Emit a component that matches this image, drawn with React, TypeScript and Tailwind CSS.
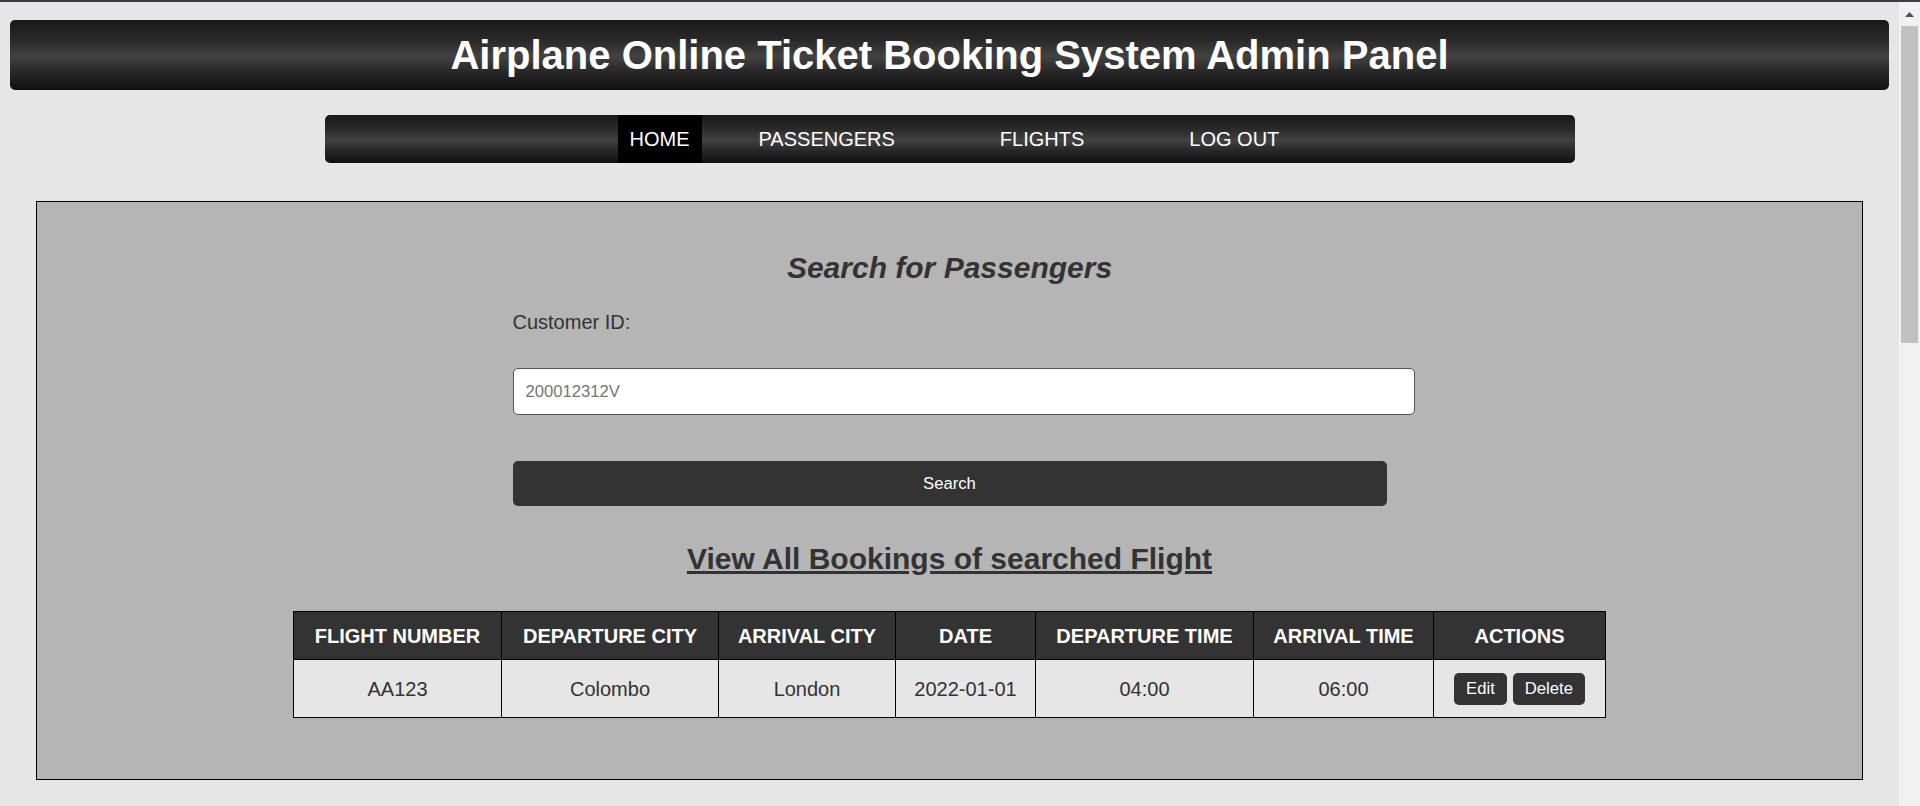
import React from "react";

const grad =
  "bg-[linear-gradient(to_bottom,#191919_0%,#2a2a2a_30%,#424242_52%,#262626_75%,#111111_100%)]";

const cols = [208, 217, 177, 140, 218, 180, 172];
const heads = [
  "FLIGHT NUMBER",
  "DEPARTURE CITY",
  "ARRIVAL CITY",
  "DATE",
  "DEPARTURE TIME",
  "ARRIVAL TIME",
  "ACTIONS",
];
const row = ["AA123", "Colombo", "London", "2022-01-01", "04:00", "06:00"];

export default function App() {
  return (
    <div
      className="w-[1920px] h-[806px] flex flex-col overflow-hidden bg-[#e6e6e6]"
      style={{ fontFamily: '"Liberation Sans", Arial, sans-serif' }}
    >
      <div className="h-[2px] bg-[#3b3e43] shrink-0" />
      <div className="flex flex-1 min-h-0">
        <main className="flex-1 min-w-0 pt-[18px]">
          <header
            className={`mx-[10px] h-[70px] rounded-[5px] ${grad} flex items-center justify-center`}
          >
            <h1 className="text-white text-[40px] font-bold leading-[46px]">
              Airplane Online Ticket Booking System Admin Panel
            </h1>
          </header>

          <nav
            className={`mt-[25px] mx-auto w-[1250px] h-[48px] rounded-[5px] ${grad} flex items-stretch pl-[293px]`}
          >
            <a className="bg-black text-white text-[20px] px-[12px] flex items-center">
              HOME
            </a>
            <a className="ml-[45px] text-white text-[20px] px-[12px] flex items-center">
              PASSENGERS
            </a>
            <a className="ml-[81px] text-white text-[20px] px-[12px] flex items-center">
              FLIGHTS
            </a>
            <a className="ml-[81px] text-white text-[20px] px-[12px] flex items-center">
              LOG OUT
            </a>
          </nav>

          <section className="mt-[38px] mx-[36px] border border-black bg-[#b5b5b5] pt-[48px] pb-[61px]">
            <h2 className="text-center text-[30px] leading-[35px] font-bold italic text-[#333333]">
              Search for Passengers
            </h2>
            <div className="w-[874px] mx-auto">
              <label className="block mt-[26px] text-[20px] leading-[23px] text-[#333333]">
                Customer ID:
              </label>
              <input
                className="block mt-[34px] w-[902px] h-[47px] px-[12px] bg-white border border-[#555555] rounded-[5px] text-[16.67px] text-[#333333] placeholder:text-[#757575] outline-none"
                placeholder="200012312V"
              />
              <button className="block mt-[46px] w-full h-[45px] rounded-[5px] bg-[#333333] text-white text-[16.67px]">
                Search
              </button>
            </div>
            <h2 className="mt-[35px] text-center text-[30px] leading-[35px] font-bold underline text-[#333333]">
              View All Bookings of searched Flight
            </h2>
            <table className="mt-[35px] mx-auto w-[1312px] table-fixed border-collapse border border-black">
              <colgroup>
                {cols.map((w, i) => (
                  <col key={i} style={{ width: w }} />
                ))}
              </colgroup>
              <thead>
                <tr>
                  {heads.map((h) => (
                    <th
                      key={h}
                      className="h-[48px] p-0 border border-black bg-[#333333] text-white text-[20px] font-bold text-center align-middle"
                    >
                      {h}
                    </th>
                  ))}
                </tr>
              </thead>
              <tbody>
                <tr>
                  {row.map((c, i) => (
                    <td
                      key={i}
                      className="h-[58px] p-0 border border-black bg-[#e6e6e6] text-[#333333] text-[20px] text-center align-middle"
                    >
                      {c}
                    </td>
                  ))}
                  <td className="h-[58px] p-0 border border-black bg-[#e6e6e6] text-center align-middle">
                    <div className="flex justify-center gap-[6px]">
                      <button className="h-[32px] px-[12px] rounded-[5px] bg-[#333333] text-white text-[16.67px]">
                        Edit
                      </button>
                      <button className="h-[32px] px-[12px] rounded-[5px] bg-[#333333] text-white text-[16.67px]">
                        Delete
                      </button>
                    </div>
                  </td>
                </tr>
              </tbody>
            </table>
          </section>
        </main>

        <aside className="w-[21px] shrink-0 bg-[#f1f1f1] flex flex-col items-center">
          <svg width="9" height="5" viewBox="0 0 9 5" className="mt-[10px]">
            <polygon points="4.5,0 9,5 0,5" fill="#505050" />
          </svg>
          <div className="mt-[9px] w-[17px] h-[317px] bg-[#c1c1c1]" />
        </aside>
      </div>
    </div>
  );
}
